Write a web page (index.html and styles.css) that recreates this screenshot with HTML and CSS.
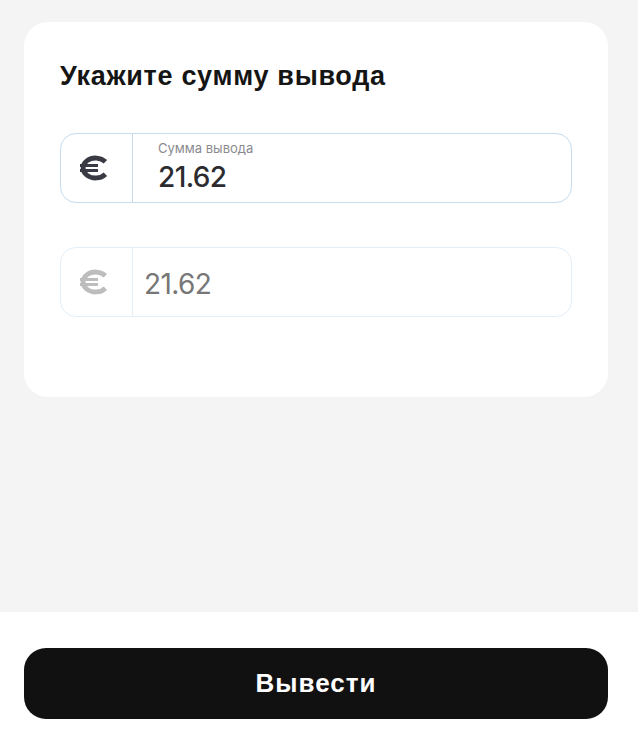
FILE: index.html
```html
<!DOCTYPE html>
<html lang="ru">

<head>
    <meta charset="UTF-8">
    <meta name="viewport" content="width=device-width, initial-scale=1.0">
    <title>Вывод средств</title>
    <link rel="stylesheet" href="styles.css">
</head>

<body>
    <div class="page">
        <main class="content">
            <div class="card">
                <h2 class="title">Укажите сумму вывода</h2>

                <div class="field active">
                    <div class="currency">
                        <svg width="32" height="26" viewBox="0 0 32 26">
                            <path d="M26.4 6.8 A12.5 10 0 1 0 26.4 19.2" fill="none" stroke="currentColor" stroke-width="4.8" />
                            <path d="M1 10.6 H19 M1 15.4 H19" fill="none" stroke="currentColor" stroke-width="3" />
                        </svg>
                    </div>
                    <div class="value">
                        <span class="label">Сумма вывода</span>
                        <span class="amount">21.62</span>
                    </div>
                </div>

                <div class="field muted">
                    <div class="currency">
                        <svg width="32" height="26" viewBox="0 0 32 26">
                            <path d="M26.4 6.8 A12.5 10 0 1 0 26.4 19.2" fill="none" stroke="currentColor" stroke-width="4.8" />
                            <path d="M1 10.6 H19 M1 15.4 H19" fill="none" stroke="currentColor" stroke-width="3" />
                        </svg>
                    </div>
                    <div class="value">
                        <span class="amount">21.62</span>
                    </div>
                </div>
            </div>
        </main>

        <footer class="footer">
            <button class="btn">Вывести</button>
        </footer>
    </div>
</body>

</html>
```

FILE: styles.css
```css
* {
    box-sizing: border-box;
}

body {
    margin: 0;
    background-color: #f4f4f4;
    font-family: Inter, "Liberation Sans", sans-serif;
}

.page {
    height: 740px;
    display: flex;
    flex-direction: column;
}

.content {
    flex: 1;
    padding: 22px 30px 22px 24px;
}

.card {
    background-color: #fff;
    border-radius: 24px;
    padding: 38px 36px 80px;
    display: flex;
    flex-direction: column;
    gap: 44px;
}

.title {
    margin: 0 0 -3px;
    font-family: "Liberation Sans", Arial, sans-serif;
    font-size: 27px;
    font-weight: bold;
    line-height: 32px;
    letter-spacing: 0.7px;
    color: #151515;
}

.field {
    height: 70px;
    border-radius: 16px;
    display: flex;
    border: 1.5px solid #c8dcee;
}

.field.muted {
    border-color: #e4eef7;
}

.currency {
    width: 72px;
    flex-shrink: 0;
    display: flex;
    align-items: center;
    justify-content: center;
    border-right: 1.5px solid #c8dcee;
    color: #3a3a44;
    padding-right: 4px;
}

.muted .currency {
    border-right-color: #e4eef7;
    color: #bdbdbd;
}

.value {
    flex: 1;
    display: flex;
    flex-direction: column;
    justify-content: center;
    padding-left: 25px;
}

.muted .value {
    padding-left: 11px;
    padding-top: 3px;
}

.label {
    font-size: 13px;
    line-height: 16px;
    color: #8a8a8f;
    margin-top: -4px;
    margin-bottom: 5px;
}

.amount {
    font-size: 28px;
    line-height: 32px;
    font-weight: 500;
    color: #2c2c30;
    letter-spacing: -0.6px;
}

.muted .amount {
    color: #777;
    font-weight: 400;
}

.footer {
    background-color: #fff;
    padding: 36px 30px 21px 24px;
}

.btn {
    width: 100%;
    height: 71px;
    border: none;
    border-radius: 22px;
    background-color: #111;
    color: #fff;
    font-family: "Liberation Sans", Arial, sans-serif;
    font-size: 26px;
    font-weight: bold;
    letter-spacing: 1px;
    cursor: pointer;
}
```
